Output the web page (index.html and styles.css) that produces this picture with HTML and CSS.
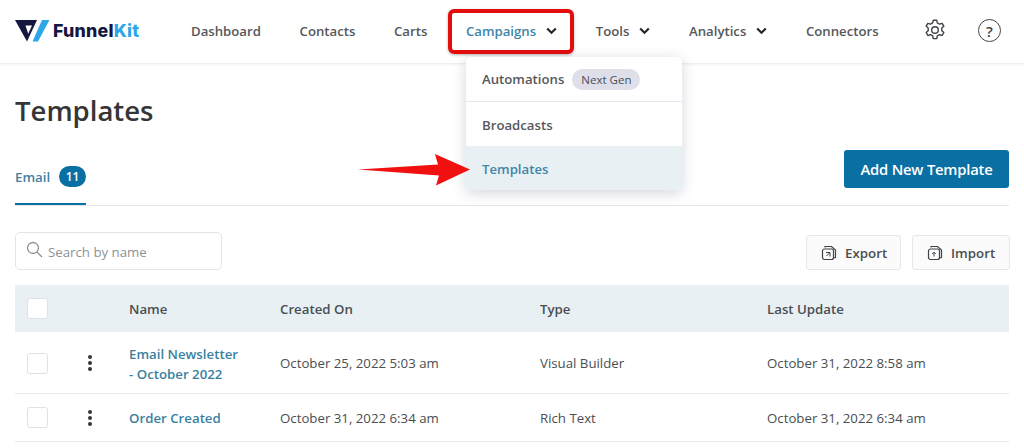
FILE: index.html
```html
<!DOCTYPE html>
<html lang="en">
<head>
<meta charset="utf-8">
<title>Templates</title>
<link rel="stylesheet" href="styles.css">
</head>
<body>
<header class="topbar">
  <a class="logo">
    <svg class="logo-mark" width="35" height="23" viewBox="0 0 35 23">
      <path fill-rule="evenodd" d="M0 1H22L12 22.500ZM10.500 6.500H17L13.200 14.800Z" fill="#14173f"/>
      <path d="M27 1H34.500L23 22.500H17.500Z" fill="#2ea7e8"/>
    </svg>
    <span class="logo-text">Funnel<span class="logo-accent">Kit</span></span>
  </a>
  <nav class="nav">
    <a class="nav-item">Dashboard</a>
    <a class="nav-item">Contacts</a>
    <a class="nav-item">Carts</a>
    <a class="nav-item nav-active">Campaigns
      <svg class="chev" width="11" height="8" viewBox="0 0 11 8"><path d="M1.200 1.500L5.500 5.800L9.800 1.500" fill="none" stroke="#23262b" stroke-width="2.200"/></svg>
    </a>
    <a class="nav-item">Tools
      <svg class="chev" width="11" height="8" viewBox="0 0 11 8"><path d="M1.200 1.500L5.500 5.800L9.800 1.500" fill="none" stroke="#23262b" stroke-width="2.200"/></svg>
    </a>
    <a class="nav-item">Analytics
      <svg class="chev" width="11" height="8" viewBox="0 0 11 8"><path d="M1.200 1.500L5.500 5.800L9.800 1.500" fill="none" stroke="#23262b" stroke-width="2.200"/></svg>
    </a>
    <a class="nav-item">Connectors</a>
  </nav>
  <div class="top-icons">
    <svg class="gear" width="24" height="24" viewBox="0 0 24 24" fill="none" stroke="#3f4347" stroke-width="1.400" stroke-linejoin="round">
      <circle cx="12" cy="12" r="3.300"/>
      <path d="M10.300 2.200h3.400l.6 2.700 2.200 1.200 2.600-.8 1.700 2.900-2 1.900v2.600l2 1.900-1.700 2.900-2.600-.8-2.200 1.200-.6 2.700h-3.400l-.6-2.700-2.200-1.200-2.600.8-1.700-2.900 2-1.900v-2.600l-2-1.900 1.700-2.900 2.600.8 2.200-1.200z"/>
    </svg>
    <span class="help">?</span>
  </div>
</header>

<div class="highlight"></div>
<div class="dropdown">
  <a class="drop-item drop-sep">Automations <span class="pill">Next Gen</span></a>
  <a class="drop-item">Broadcasts</a>
  <a class="drop-item drop-current">Templates</a>
</div>
<svg class="arrow" width="112" height="32" viewBox="0 0 112 32"><path d="M0 15.500L80 10.500L77 0L112 15.500L78 31.500L81 21.500Z" fill="#f01010"/></svg>

<main class="page">
  <h1 class="title">Templates</h1>
  <div class="tabs">
    <a class="tab">Email <span class="count">11</span></a>
    <button class="primary">Add New Template</button>
  </div>
  <div class="tools">
    <div class="search">
      <svg width="17" height="17" viewBox="0 0 17 17" fill="none" stroke="#8b9094" stroke-width="1.300"><circle cx="7" cy="7" r="5.500"/><path d="M11 11L16 16"/></svg>
      <span>Search by name</span>
    </div>
    <div class="actions">
      <button class="ghost">
        <svg width="16" height="16" viewBox="0 0 16 16" fill="none" stroke="#3f4347" stroke-width="1.200"><path d="M4 2.500V1.500H10.500L14.500 5V12.500L12.500 13"/><rect x="1.500" y="4" width="11" height="10.500" rx="2"/><path d="M5 7.500H9V11.500M5.500 11L8.500 8" stroke-width="1"/></svg>
        Export
      </button>
      <button class="ghost">
        <svg width="16" height="16" viewBox="0 0 16 16" fill="none" stroke="#3f4347" stroke-width="1.200"><path d="M4 2.500V1.500H10.500L14.500 5V12.500L12.500 13"/><rect x="1.500" y="4" width="11" height="10.500" rx="2"/><path d="M7 11.500V7.500M5.200 9L7 7.200L8.800 9" stroke-width="1"/></svg>
        Import
      </button>
    </div>
  </div>
  <div class="table">
    <div class="row row-head">
      <span class="check"></span><span></span>
      <span>Name</span><span>Created On</span><span>Type</span><span>Last Update</span>
    </div>
    <div class="row row-tall">
      <span class="check"></span><span class="dots"><i></i><i></i><i></i></span>
      <a class="name">Email Newsletter<br>- October 2022</a>
      <span>October 25, 2022 5:03 am</span><span>Visual Builder</span><span>October 31, 2022 8:58 am</span>
    </div>
    <div class="row">
      <span class="check"></span><span class="dots"><i></i><i></i><i></i></span>
      <a class="name">Order Created</a>
      <span>October 31, 2022 6:34 am</span><span>Rich Text</span><span>October 31, 2022 6:34 am</span>
    </div>
  </div>
</main>
</body>
</html>
```
FILE: styles.css
```css
* { box-sizing: border-box; }
html, body { margin: 0; height: 448px; overflow: hidden; }
body { background: #fff; font-family: "Open Sans", "Noto Sans", sans-serif; font-size: 13.250px; color: #4a4e52; position: relative; }
.topbar { height: 63px; display: flex; align-items: center; padding: 0 15px 2px; background: #fff; box-shadow: 0 1px 3px rgba(40,50,60,.12); }
.logo { display: flex; align-items: center; gap: 3px; width: 176px; }
.logo-text { font-family: Inter, sans-serif; font-weight: 800; font-size: 17.800px; color: #14173f; letter-spacing: .2px; }
.logo-accent { color: #2ea7e8; }
.nav { display: flex; align-items: center; gap: 38.600px; font-size: 13.200px; font-weight: 550; color: #55585b; }
.nav-item { display: flex; align-items: center; gap: 10px; white-space: nowrap; }
.nav-active { color: #3f86a8; }
.chev { margin-top: 1px; }
.top-icons { margin-left: auto; display: flex; align-items: center; gap: 31px; padding-right: 8px; }
.gear { margin-top: -2px; }
.help { width: 23px; height: 23px; border: 1.500px solid #3f4347; border-radius: 50%; display: flex; align-items: center; justify-content: center; font-size: 15px; font-weight: 600; color: #3f4347; }
.highlight { position: absolute; left: 448px; top: 9px; width: 126px; height: 45px; border: 4px solid #e30d0d; border-radius: 6px; box-shadow: 0 1px 3px rgba(0,0,0,.3); }
.dropdown { position: absolute; left: 466px; top: 57px; width: 216px; height: 133px; background: #fff; border-radius: 5px; box-shadow: 0 3px 14px rgba(60,70,110,.22); font-size: 13.200px; font-weight: 550; color: #55585b; overflow: hidden; z-index: 2; }
.drop-item { height: 44px; display: flex; align-items: center; gap: 8px; padding: 2px 0 0 16px; }
.drop-sep { height: 45px; border-bottom: 1px solid #e6e9ec; padding-top: 0; }
.drop-current { background: #e8f0f4; color: #3f86a8; }
.pill { background: #dedfe9; color: #4a4e5c; font-size: 11.500px; font-weight: 500; padding: 3px 9px; border-radius: 12px; }
.arrow { position: absolute; left: 358px; top: 154px; z-index: 3; }
.page { padding: 0 15px; }
.title { margin: 0; padding-top: 28px; height: 87px; font-size: 27.500px; line-height: 40px; font-weight: 570; color: #353535; }
.tabs { height: 56px; display: flex; align-items: flex-start; justify-content: space-between; border-bottom: 1px solid #e4e7ea; }
.tab { height: 55px; width: 71px; padding-top: 16px; display: flex; align-items: flex-start; gap: 9px; font-weight: 600; color: #3f7f9f; border-bottom: 2px solid #0a6fa3; line-height: 22px; }
.count { background: #0a6fa3; color: #fff; height: 21px; width: 28px; border-radius: 11px; display: flex; align-items: center; justify-content: center; font-size: 12px; }
.primary { width: 165px; height: 38px; border: 0; border-radius: 3px; background: #0a6fa3; color: #fff; font: 600 14.800px "Open Sans", sans-serif; letter-spacing: -.2px; padding: 0; }
.tools { display: flex; justify-content: space-between; align-items: flex-start; padding-top: 27px; height: 79px; }
.search { width: 207px; height: 38px; margin-top: -1px; border: 1px solid #e2e4e8; border-radius: 5px; display: flex; align-items: center; gap: 5px; padding: 2px 0 0 10px; color: #8e9296; }
.search svg { margin-top: -6px; }
.actions { display: flex; gap: 11px; padding-top: 2px; margin-right: -1px; }
.ghost { height: 35px; width: 95px; padding: 0 0 0 14px; display: flex; align-items: center; gap: 8px; border: 1px solid #e6e7ea; border-radius: 3px; background: #fbfbfb; color: #4a4e52; font: 550 13.300px "Open Sans", sans-serif; }
.ghost + .ghost { width: 98px; }
.table { width: 994px; }
.row { display: grid; grid-template-columns: 54px 48px 151px 260px 227px 1fr; padding-left: 12px; height: 48px; align-items: center; border-bottom: 1px solid #e6e9ec; }
.row-head { background: #e8f0f4; font-weight: 550; color: #4a4e52; border-bottom: 0; margin-bottom: 1px; height: 47px; }
.row-tall { height: 61px; }
.check { width: 21px; height: 21px; border: 1px solid #dfe1e6; border-radius: 3px; background: #fff; }
.dots { display: flex; flex-direction: column; gap: 2px; width: 5px; margin-left: 7px; }
.dots i { width: 4px; height: 4px; background: #33373b; border-radius: 50%; }
.name { color: #3a7f9f; font-weight: 600; line-height: 20px; }
.row-tall .name { padding-top: 2px; }
```
